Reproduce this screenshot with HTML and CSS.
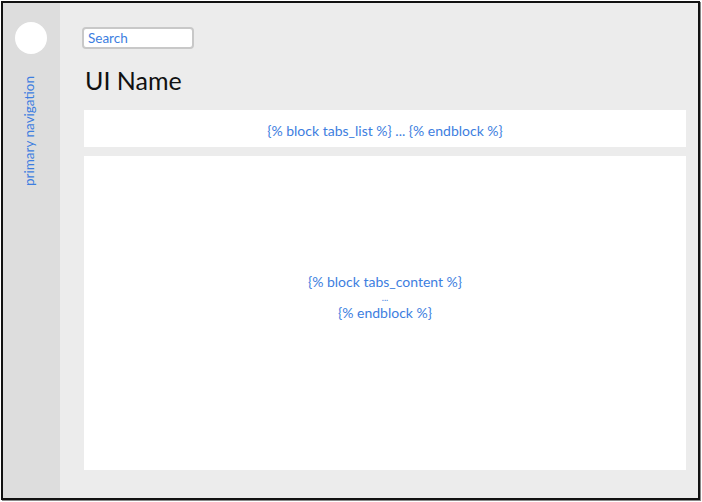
FILE: index.html
```html
<!DOCTYPE html>
<html>
<head>
<meta charset="utf-8">
<link rel="stylesheet" href="styles.css">
</head>
<body>
<div class="frame">
  <aside class="sidebar">
    <div class="avatar"></div>
    <div class="nav-label">primary navigation</div>
  </aside>
  <main class="main">
    <div class="search">Search</div>
    <h1 class="title">UI Name</h1>
    <div class="tabs">{% block tabs_list %} ... {% endblock %}</div>
    <div class="content">
      <div class="line">{% block tabs_content %}</div>
      <div class="dots">...</div>
      <div class="line">{% endblock %}</div>
    </div>
  </main>
</div>
</body>
</html>
```
FILE: styles.css
```css
html, body {
  margin: 0;
  padding: 0;
  background: #ffffff;
}
body {
  font-family: Lato, "Open Sans", sans-serif;
  padding: 1px 0 0 1px;
  width: 702px;
  height: 502px;
  box-sizing: border-box;
}
.frame {
  width: 699px;
  height: 499px;
  box-sizing: border-box;
  border: 2px solid #111;
  display: flex;
  background: #ececec;
  box-shadow: 1px 1px 0 #888;
}
.sidebar {
  width: 57px;
  flex: none;
  background: #dddddd;
  display: flex;
  flex-direction: column;
  align-items: center;
  padding-top: 19px;
  box-sizing: border-box;
}
.avatar {
  width: 32px;
  height: 32px;
  border-radius: 50%;
  background: #ffffff;
  margin-left: -2px;
}
.nav-label {
  writing-mode: vertical-rl;
  transform: rotate(180deg);
  color: #3d7ee0;
  font-size: 13.5px;
  margin-top: 22px;
  margin-left: -6px;
  height: 110px;
  text-align: center;
  white-space: nowrap;
}
.main {
  flex: 1;
  display: flex;
  flex-direction: column;
  padding: 24px 12px 28px 24px;
  box-sizing: border-box;
}
.search {
  width: 112px;
  height: 22px;
  box-sizing: border-box;
  border: 2px solid #c8c8c8;
  border-radius: 4px;
  background: #fff;
  color: #3d7ee0;
  font-size: 13.5px;
  line-height: 18px;
  padding-left: 4px;
  margin-left: -2px;
}
.title {
  margin: 18px 0 0 1px;
  font-weight: normal;
  font-size: 25px;
  line-height: 26px;
  color: #111;
  height: 43px;
}
.tabs {
  background: #fff;
  height: 37px;
  flex: none;
  display: flex;
  align-items: center;
  justify-content: center;
  color: #3d7ee0;
  font-size: 14px;
  padding-top: 3px;
  box-sizing: border-box;
}
.content {
  margin-top: 9px;
  flex: 1;
  background: #fff;
  display: flex;
  flex-direction: column;
  align-items: center;
  justify-content: center;
  color: #3d7ee0;
  font-size: 14px;
  padding-bottom: 32px;
  box-sizing: border-box;
}
.line {
  line-height: 16px;
}
.dots {
  font-size: 9px;
  line-height: 15px;
}
```
